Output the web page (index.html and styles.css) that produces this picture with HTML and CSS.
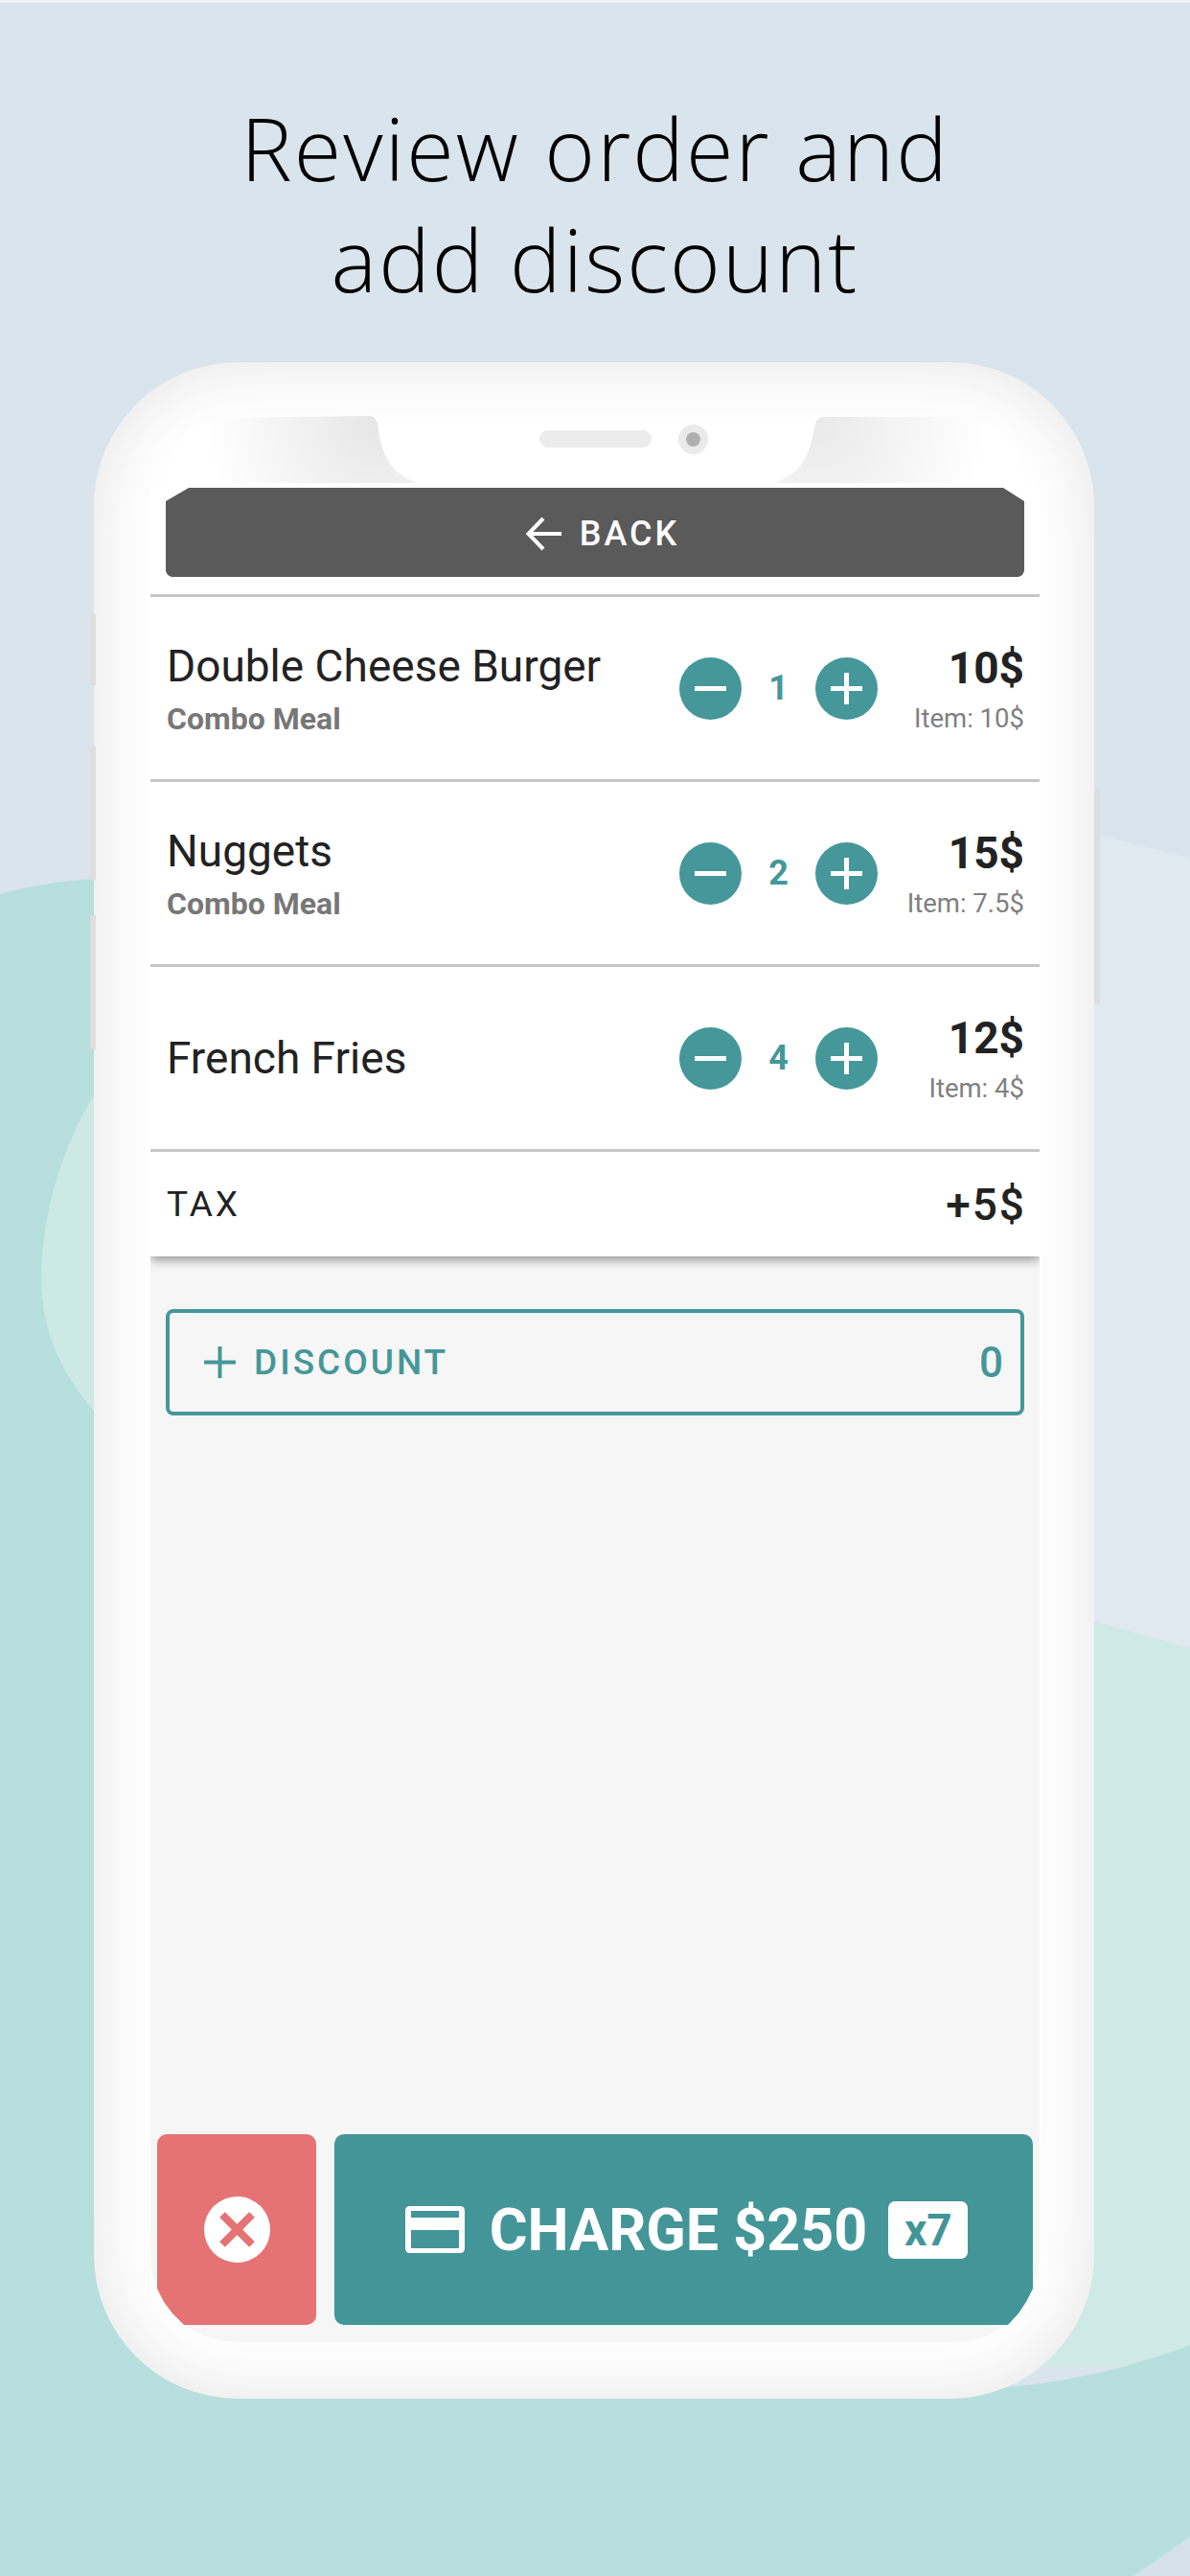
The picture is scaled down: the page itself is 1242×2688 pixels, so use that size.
FILE: index.html
```html
<!DOCTYPE html>
<html lang="en">
<head>
<meta charset="utf-8">
<title>Review order and add discount</title>
<link rel="stylesheet" href="styles.css">
</head>
<body>
<div class="page">
  <svg class="backdrop" viewBox="0 0 1242 2688" aria-hidden="true">
    <rect width="1242" height="2688" fill="#d9e4ec"/>
    <rect width="1242" height="3" fill="#eef2f5"/>
    <path d="M1100 860L1242 895V1725H1100Z" fill="#e1e9f0"/>
    <path d="M1100 1680L1242 1720V2470H900Z" fill="#cfe9e6"/>
    <path d="M0 933C30 925 65 918 110 917H500V2490H960C1060 2500 1160 2478 1242 2447V2688H0Z" fill="#b6dfdd"/>
    <path d="M110 1125C70 1180 43 1260 43 1335C43 1400 75 1450 110 1485Z" fill="#cce9e6"/>
    <path d="M1183 2688L1242 2647V2688Z" fill="#d5e2ea"/>
  </svg>

  <h1 class="title">Review order and<br>add discount</h1>

  <div class="phone">
    <span class="side side-mute"></span>
    <span class="side side-up"></span>
    <span class="side side-down"></span>
    <span class="side side-power"></span>

    <div class="bezel">
      <svg class="ears" viewBox="157 425 928 85" aria-hidden="true">
        <defs>
          <radialGradient id="earL" gradientUnits="userSpaceOnUse" cx="394" cy="440" r="180">
            <stop offset="0" stop-color="#e6e6e6"/><stop offset="1" stop-color="#fff"/>
          </radialGradient>
          <radialGradient id="earR" gradientUnits="userSpaceOnUse" cx="851" cy="440" r="180">
            <stop offset="0" stop-color="#e9e9e9"/><stop offset="1" stop-color="#fff"/>
          </radialGradient>
        </defs>
        <path d="M175 504Q178 440 235 436L385 434Q392 434 394 442C398 478 410 495 436 504Z" fill="url(#earL)"/>
        <path d="M807 504C835 495 845 478 851 442Q852 436 860 435L1005 435Q1060 440 1068 504Z" fill="url(#earR)"/>
      </svg>
      <span class="speaker"></span>
      <span class="camera"><span class="lens"></span></span>
    </div>

    <div class="screen">
      <div class="head">
        <button class="back">
          <svg class="back-arrow" viewBox="0 0 38 36" aria-hidden="true"><path d="M37 18H3M18 2L2.500 18L18 34" fill="none" stroke="#fff" stroke-width="4"/></svg>
          <span>BACK</span>
        </button>

        <div class="row">
          <div class="item"><div class="name">Double Cheese Burger</div><div class="sub">Combo Meal</div></div>
          <div class="stepper">
            <svg class="step" viewBox="0 0 65 65" aria-hidden="true"><circle cx="32.500" cy="32.500" r="32.500" fill="#459799"/><path d="M16 32.500H49" stroke="#fff" stroke-width="5"/></svg>
            <span class="qty">1</span>
            <svg class="step" viewBox="0 0 65 65" aria-hidden="true"><circle cx="32.500" cy="32.500" r="32.500" fill="#459799"/><path d="M16 32.500H49M32.500 16V49" stroke="#fff" stroke-width="5"/></svg>
          </div>
          <div class="price"><div class="total">10$</div><div class="unit">Item: 10$</div></div>
        </div>

        <div class="row">
          <div class="item"><div class="name">Nuggets</div><div class="sub">Combo Meal</div></div>
          <div class="stepper">
            <svg class="step" viewBox="0 0 65 65" aria-hidden="true"><circle cx="32.500" cy="32.500" r="32.500" fill="#459799"/><path d="M16 32.500H49" stroke="#fff" stroke-width="5"/></svg>
            <span class="qty">2</span>
            <svg class="step" viewBox="0 0 65 65" aria-hidden="true"><circle cx="32.500" cy="32.500" r="32.500" fill="#459799"/><path d="M16 32.500H49M32.500 16V49" stroke="#fff" stroke-width="5"/></svg>
          </div>
          <div class="price"><div class="total">15$</div><div class="unit">Item: 7.5$</div></div>
        </div>

        <div class="row">
          <div class="item"><div class="name">French Fries</div></div>
          <div class="stepper">
            <svg class="step" viewBox="0 0 65 65" aria-hidden="true"><circle cx="32.500" cy="32.500" r="32.500" fill="#459799"/><path d="M16 32.500H49" stroke="#fff" stroke-width="5"/></svg>
            <span class="qty">4</span>
            <svg class="step" viewBox="0 0 65 65" aria-hidden="true"><circle cx="32.500" cy="32.500" r="32.500" fill="#459799"/><path d="M16 32.500H49M32.500 16V49" stroke="#fff" stroke-width="5"/></svg>
          </div>
          <div class="price"><div class="total">12$</div><div class="unit">Item: 4$</div></div>
        </div>

        <div class="tax"><span class="tax-label">TAX</span><span class="tax-value">+5$</span></div>
      </div>

      <div class="discount">
        <svg class="discount-plus" viewBox="0 0 33 33" aria-hidden="true"><path d="M0 16.500H33M16.500 0V33" stroke="#459799" stroke-width="4"/></svg>
        <span class="discount-label">DISCOUNT</span>
        <span class="discount-value">0</span>
      </div>

      <div class="actions">
        <button class="cancel">
          <svg class="cancel-icon" viewBox="0 0 69 69" aria-hidden="true"><circle cx="34.500" cy="34.500" r="34.500" fill="#fff"/><path d="M19 19L50 50M50 19L19 50" stroke="#e57373" stroke-width="8"/></svg>
        </button>
        <button class="charge">
          <svg class="card-icon" viewBox="0 0 62 49" aria-hidden="true"><path fill="#fff" fill-rule="evenodd" d="M5 0H57Q62 0 62 5V44Q62 49 57 49H5Q0 49 0 44V5Q0 0 5 0ZM6 5V12H56V5ZM6 25V44H56V25Z"/></svg>
          <span class="charge-label">CHARGE $250</span>
          <span class="badge">x7</span>
        </button>
      </div>
    </div>
  </div>
</div>
</body>
</html>
```
FILE: styles.css
```css
* { box-sizing: border-box; }
html, body { margin: 0; padding: 0; }
body { font-family: Roboto, "Liberation Sans", sans-serif; color: #222; }
button { font: inherit; border: 0; padding: 0; }

.page { position: relative; width: 1242px; height: 2688px; overflow: hidden; }
.backdrop { position: absolute; inset: 0; width: 1242px; height: 2688px; }

.title {
  position: relative;
  height: 378px;
  margin: 0;
  padding-top: 96px;
  font-family: "Open Sans", sans-serif;
  font-weight: 300;
  font-size: 90px;
  line-height: 116px;
  letter-spacing: 2.100px;
  text-align: center;
  color: #000;
}

.phone {
  position: relative;
  width: 1044px;
  height: 2125px;
  margin-left: 98px;
  padding: 0 57px 0 59px;
  background: #fff;
  border-radius: 150px;
  box-shadow: inset 0 0 70px rgba(50, 50, 60, .13);
}
.side { position: absolute; width: 6px; background: #dedede; border-radius: 3px 0 0 3px; left: -4px; }
.side-mute { top: 263px; height: 74px; }
.side-up { top: 400px; height: 141px; }
.side-down { top: 577px; height: 140px; }
.side-power { left: auto; right: -6px; top: 447px; height: 223px; border-radius: 0 3px 3px 0; }

.bezel {
  position: relative;
  height: 130px;
  padding: 30px 0 0 406px;
  display: flex;
  align-items: center;
  gap: 28px;
}
.ears { position: absolute; left: 0; top: 47px; width: 928px; height: 85px; }
.speaker { position: relative; width: 117px; height: 18px; border-radius: 9px; background: #ececec; }
.camera {
  position: relative;
  width: 31px; height: 31px;
  border-radius: 50%;
  background: #eaeaea;
  display: flex; align-items: center; justify-content: center;
}
.lens { width: 15px; height: 15px; border-radius: 50%; background: #b0b0b0; }

.screen {
  position: relative;
  height: 1936px;
  display: flex;
  flex-direction: column;
  background: #f6f6f6;
  border-radius: 0 0 90px 90px;
}
.head {
  position: relative;
  padding-top: 1px;
  background: #fff;
  box-shadow: 0 4px 10px rgba(0, 0, 0, .38);
  clip-path: inset(0 0 -30px 0);
}

.back {
  display: flex;
  align-items: center;
  justify-content: center;
  gap: 18px;
  width: 896px;
  height: 93px;
  margin: 0 16px 18px;
  padding: 2px 0 0 16px;
  background: #5a5a5a;
  color: #fff;
  font-size: 36px;
  font-weight: 500;
  letter-spacing: 3px;
  clip-path: polygon(0 14px, 24px 0, calc(100% - 22px) 0, 100% 14px, 100% calc(100% - 6px), calc(100% - 2px) calc(100% - 2px), calc(100% - 6px) 100%, 6px 100%, 2px calc(100% - 2px), 0 calc(100% - 6px));
}
.back-arrow { width: 38px; height: 36px; }

.row {
  display: grid;
  grid-template-columns: 1fr 207px 153px;
  align-items: center;
  height: 193px;
  padding: 0 16px 0 17px;
  border-top: 3px solid #c6c6c6;
}
.name { font-size: 46px; line-height: 54px; color: #222; }
.sub { margin: 7px 0 -3px; font-size: 32px; line-height: 42px; font-weight: 700; color: #777; }
.stepper { display: flex; align-items: center; justify-content: space-between; }
.step { width: 65px; height: 65px; display: block; }
.qty { font-size: 36px; font-weight: 700; color: #459799; }
.price { text-align: right; margin-top: 2px; }
.total { font-size: 46px; line-height: 52px; font-weight: 700; color: #222; }
.unit { font-size: 27.500px; line-height: 36px; margin-top: 9px; color: #808080; }

.tax {
  display: flex;
  align-items: center;
  justify-content: space-between;
  height: 112px;
  padding: 0 16px 0 17px;
  border-top: 3px solid #c6c6c6;
}
.tax-label { font-size: 37px; letter-spacing: 3px; color: #222; }
.tax-value { font-size: 46px; font-weight: 500; letter-spacing: 2px; margin-right: -2px; color: #222; }

.discount {
  display: flex;
  align-items: center;
  height: 111px;
  margin: 55px 16px 0;
  padding: 0 18px 0 36px;
  border: 4px solid #459799;
  border-radius: 8px;
  color: #459799;
}
.discount-plus { width: 33px; height: 33px; margin-right: 19px; }
.discount-label { flex: 1; font-size: 37px; font-weight: 500; letter-spacing: 3px; }
.discount-value { font-size: 44px; font-weight: 500; }

.actions {
  display: flex;
  gap: 19px;
  height: 199px;
  margin-top: auto;
  margin-bottom: 18px;
  padding: 0 7px;
}
.cancel {
  width: 166px;
  background: #e57373;
  border-radius: 10px;
  display: flex; align-items: center; justify-content: center;
  clip-path: polygon(0 0, 100% 0, 100% 100%, 28px 100%, 16px 187px, 7px 175px, 0 161px);
}
.cancel-icon { width: 69px; height: 69px; }
.charge {
  flex: 1;
  display: flex;
  align-items: center;
  justify-content: center;
  padding-left: 6px;
  background: #439598;
  color: #fff;
  border-radius: 10px;
  clip-path: polygon(0 0, 100% 0, 100% 161px, calc(100% - 7px) 175px, calc(100% - 15px) 187px, calc(100% - 26px) 100%, 0 100%);
}
.card-icon { width: 62px; height: 49px; margin-right: 26px; }
.charge-label { font-size: 61px; font-weight: 700; margin-right: 22px; }
.badge {
  width: 83px; height: 60px;
  background: #fff;
  border-radius: 7px;
  color: #439598;
  font-size: 46px;
  font-weight: 700;
  line-height: 60px;
  text-align: center;
}
```
